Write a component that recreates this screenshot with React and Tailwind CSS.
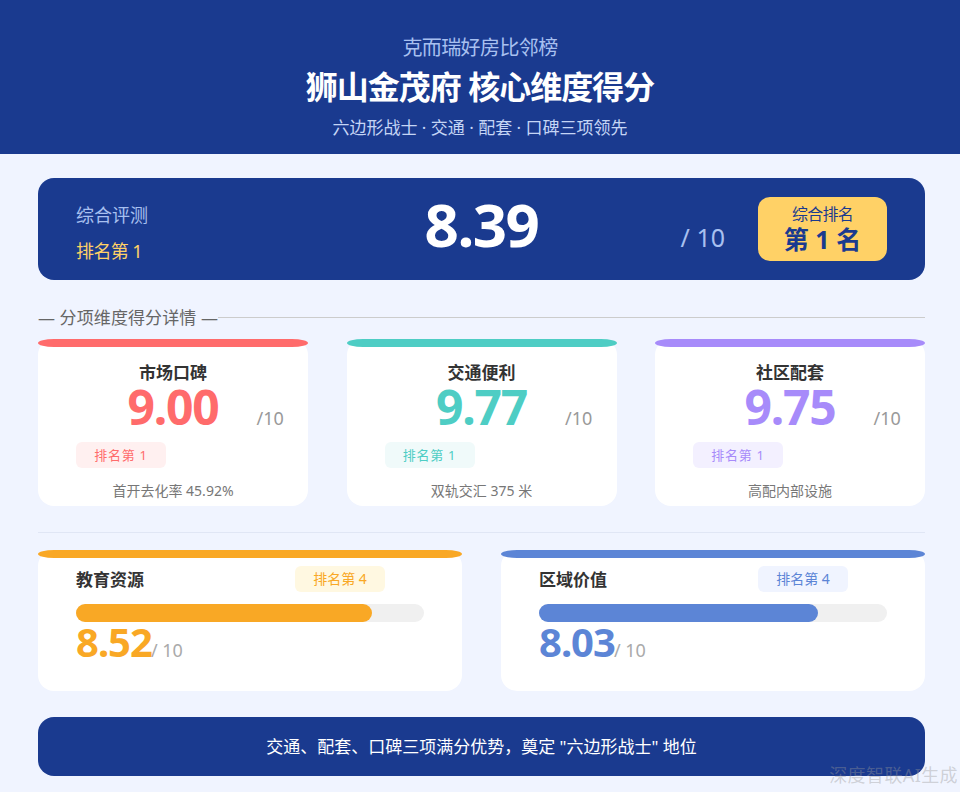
const topCards = [
  { name: "市场口碑", score: "9.00", note: "首开去化率 45.92%", color: "text-[#ff6b6b]", bar: "bg-[#ff6b6b]", tag: "bg-[#fff0f0]" },
  { name: "交通便利", score: "9.77", note: "双轨交汇 375 米", color: "text-[#4ecdc4]", bar: "bg-[#4ecdc4]", tag: "bg-[#f0fafa]" },
  { name: "社区配套", score: "9.75", note: "高配内部设施", color: "text-[#a78bfa]", bar: "bg-[#a78bfa]", tag: "bg-[#f3f0ff]" },
];

const bottomCards = [
  { name: "教育资源", score: "8.52", width: "w-[85.2%]", color: "text-[#f9a825]", bar: "bg-[#f9a825]", tag: "bg-[#fff8e1]" },
  { name: "区域价值", score: "8.03", width: "w-[80.3%]", color: "text-[#5c85d6]", bar: "bg-[#5c85d6]", tag: "bg-[#f0f4ff]" },
];

function TopCard({ card }) {
  return (
    <div className="bg-white rounded-2xl h-[167px] flex flex-col">
      <div className={`h-2 rounded-[16px/4px] ${card.bar}`}></div>
      <div className="mt-[14px] text-center text-[17px] leading-[24px] font-bold text-[#333]">{card.name}</div>
      <div className="-mt-[2px] grid grid-cols-[1fr_auto_1fr] items-end">
        <div></div>
        <div className={`text-[48px] leading-[48px] font-bold tracking-[-1.2px] ${card.color}`}>{card.score}</div>
        <div className="pl-[38px] mb-[1px] text-[18px] leading-[24px] text-[#999] whitespace-nowrap">/10</div>
      </div>
      <div className="mt-[11px] ml-[38px]">
        <span className={`inline-block w-[90px] h-[26px] rounded-md text-center text-[13px] leading-[26px] tracking-[0.7px] ${card.tag} ${card.color}`}>排名第 1</span>
      </div>
      <div className="mt-[13px] text-center text-[14px] leading-[20px] text-[#777]">{card.note}</div>
    </div>
  );
}

function BottomCard({ card }) {
  return (
    <div className="bg-white rounded-2xl h-[141px] flex flex-col">
      <div className={`h-2 rounded-[16px/4px] ${card.bar}`}></div>
      <div className="px-[38px]">
        <div className="flex items-center justify-between mt-2 h-[26px]">
          <span className="mt-[2px] text-[17px] font-bold text-[#333]">{card.name}</span>
          <span className={`w-[90px] h-[26px] mr-[39px] rounded-md text-center text-[14px] leading-[26px] ${card.tag} ${card.color}`}>排名第 4</span>
        </div>
        <div className="mt-[12px] h-[18px] rounded-full bg-[#f0f0f0]">
          <div className={`h-full rounded-full ${card.width} ${card.bar}`}></div>
        </div>
        <div className="flex items-end h-[41px]">
          <span className={`text-[40px] leading-[42px] font-bold tracking-[-1px] ${card.color}`}>{card.score}</span>
          <span className="-ml-px text-[18px] leading-[26px] text-[#aaa]">/ 10</span>
        </div>
      </div>
    </div>
  );
}

export default function App() {
  return (
    <div className="relative h-[792px] overflow-hidden bg-[#f0f4ff] font-['Noto_Sans','Noto_Sans_CJK_SC',sans-serif]">
      <header className="h-[154px] bg-[#1a3a8f] flex flex-col items-center pt-[35px]">
        <div className="text-[20px] leading-[26px] text-[#a8c0f0] tracking-[-0.6px]">克而瑞好房比邻榜</div>
        <div className="mt-[5px] text-[32px] leading-[42px] font-bold text-white tracking-[-1px]">狮山金茂府 核心维度得分</div>
        <div className="mt-[8px] text-[17px] leading-[24px] text-[#c5d5f5]">六边形战士 · 交通 · 配套 · 口碑三项领先</div>
      </header>

      <main className="pl-[38px] pr-[35px] pt-6">
        <section className="h-[102px] bg-[#1a3a8f] rounded-2xl px-[38px] grid grid-cols-[1fr_auto_1fr] items-center">
          <div className="pt-[8px]">
            <div className="text-[18px] leading-[24px] text-[#a8c0f0]">综合评测</div>
            <div className="mt-3 text-[18px] leading-[24px] tracking-[-0.6px] text-[#ffd166]">排名第 1</div>
          </div>
          <div className="-mt-[10px] text-[60px] leading-[80px] font-bold text-white tracking-[-1.5px]">8.39</div>
          <div className="flex items-center justify-end gap-[33px]">
            <span className="mt-[16px] text-[25px] leading-[32px] text-[#a8c0f0]">/ 10</span>
            <div className="w-[129px] h-[64px] rounded-xl bg-[#ffd166] flex flex-col items-center justify-center text-[#1a3a8f]">
              <span className="text-[16px] leading-[20px] tracking-[-0.8px]">综合排名</span>
              <span className="text-[25px] leading-[30px] font-bold">第 1 名</span>
            </div>
          </div>
        </section>

        <div className="mt-[26px] flex items-center h-[24px]">
          <span className="text-[17px] tracking-[0.1px] text-[#666] whitespace-nowrap">— 分项维度得分详情 —</span>
          <div className="flex-1 h-px bg-[#ccc] -mt-[2px]"></div>
        </div>

        <div className="mt-[9px] grid grid-cols-3 gap-[38.5px]">
          {topCards.map((card) => (
            <TopCard key={card.name} card={card} />
          ))}
        </div>

        <div className="mt-[26px] h-px bg-[#e0e6f5]"></div>

        <div className="mt-[17px] grid grid-cols-2 gap-[39px]">
          {bottomCards.map((card) => (
            <BottomCard key={card.name} card={card} />
          ))}
        </div>

        <div className="mt-[26px] h-[59px] rounded-2xl bg-[#1a3a8f] flex items-center justify-center text-[17px] text-white">
          交通、配套、口碑三项满分优势，奠定 "六边形战士" 地位
        </div>
      </main>

      <div className="absolute right-[2px] bottom-[5px] text-[18px] leading-[24px] tracking-[0.4px] text-[#999]/40">深度智联AI生成</div>
    </div>
  );
}
